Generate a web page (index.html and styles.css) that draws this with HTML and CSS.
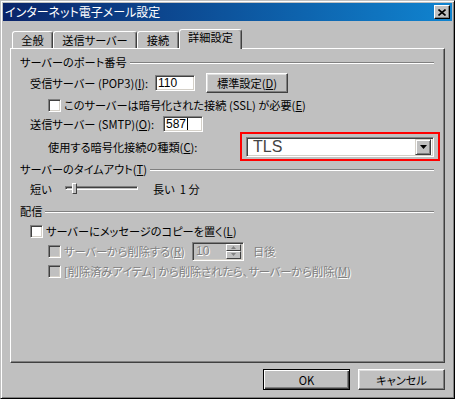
FILE: index.html
```html
<!DOCTYPE html>
<html lang="ja">
<head>
<meta charset="utf-8">
<title>インターネット電子メール設定</title>
<link rel="stylesheet" href="styles.css">
</head>
<body>
<div class="window">
  <div class="titlebar">
    <span class="title">インターネット電子メール設定</span>
    <span class="close"><svg width="8" height="7" viewBox="0 0 8 7"><path d="M0.5 0.5 L7.5 6.5 M7.5 0.5 L0.5 6.5" stroke="#000" stroke-width="1.6" fill="none"/></svg></span>
  </div>
  <div class="body">
    <div class="tabs">
      <div class="tab w1">全般</div>
      <div class="tab w2">送信サーバー</div>
      <div class="tab w3">接続</div>
      <div class="tab sel">詳細設定</div>
    </div>
    <div class="panel">
      <div class="group"><span>サーバーのポート番号</span><span class="gline"></span></div>
      <div class="row h20 mt3 i1">
        <span class="lbl lw125">受信サーバー (POP3)(<u>I</u>):</span>
        <span class="edit w40">110</span>
        <span class="btn pbtn">標準設定(<u>D</u>)</span>
      </div>
      <div class="row mt4 i2">
        <span class="cb"></span><span class="ctext">このサーバーは暗号化された接続 (SSL) が必要(<u>E</u>)</span>
      </div>
      <div class="row mt3 i1">
        <span class="lbl lw133">送信サーバー (SMTP)(<u>O</u>):</span>
        <span class="edit w40">587<span class="caret"></span></span>
      </div>
      <div class="row h29 i2">
        <span class="lbl lw192">使用する暗号化接続の種類(<u>C</u>):</span>
        <span class="hl">
          <span class="combo"><span class="cval">TLS</span><span class="drop"><svg width="7" height="4" viewBox="0 0 7 4"><path d="M0 0 H7 L3.5 4 Z" fill="#000"/></svg></span></span>
        </span>
      </div>
      <div class="group"><span>サーバーのタイムアウト(<u>T</u>)</span><span class="gline"></span></div>
      <div class="row mt4 i1">
        <span class="lbl lw35">短い</span>
        <span class="slider"><span class="track"></span><span class="thumb"></span></span>
        <span class="long">長い&nbsp;&nbsp;1 分</span>
      </div>
      <div class="group mt6"><span>配信</span><span class="gline"></span></div>
      <div class="row mt4 i1">
        <span class="cb"></span><span class="ctext">サーバーにメッセージのコピーを置く(<u>L</u>)</span>
      </div>
      <div class="row h20 mt2 i2">
        <span class="cb dis"></span><span class="ctext off lw128">サーバーから削除する(<u>R</u>)</span>
        <span class="edit spinedit"><span class="off">10</span>
          <span class="spin"><span class="sb"><svg width="5" height="3" viewBox="0 0 5 3"><path d="M2.5 0 L5 3 H0 Z" fill="#808080"/></svg></span><span class="sb"><svg width="5" height="3" viewBox="0 0 5 3"><path d="M0 0 H5 L2.5 3 Z" fill="#808080"/></svg></span></span>
        </span>
        <span class="off days">日後</span>
      </div>
      <div class="row mt2 i2">
        <span class="cb dis"></span><span class="ctext off">[削除済みアイテム] から削除されたら、サーバーから削除(<u>M</u>)</span>
      </div>
    </div>
    <div class="actions">
      <span class="btn abtn default">OK</span>
      <span class="btn abtn">キャンセル</span>
    </div>
  </div>
</div>
</body>
</html>
```

FILE: styles.css
```css
* { box-sizing: border-box; }
body {
  margin: 0;
  background: #c0c0c0;
  font-family: "Noto Sans CJK JP", sans-serif;
  font-size: 11.2px;
  line-height: 16px;
  color: #000;
  font-feature-settings: "palt";
}
u { text-decoration: underline; text-underline-offset: 1px; }
.window {
  width: 455px;
  height: 399px;
  border: 1px solid;
  border-color: #c0c0c0 #000 #000 #c0c0c0;
  box-shadow: inset 1px 1px #fff, inset -1px -1px #808080;
  padding: 2px;
  display: flex;
  flex-direction: column;
}
.titlebar {
  height: 18px;
  flex: none;
  background: linear-gradient(to right, #0a246a, #1084d0);
  display: flex;
  align-items: center;
  justify-content: space-between;
  padding: 0 2px;
  color: #fff;
}
.title { line-height: 16px; font-size: 12px; }
.close {
  width: 16px;
  height: 14px;
  background: #c0c0c0;
  border: 1px solid;
  border-color: #fff #000 #000 #fff;
  box-shadow: inset -1px -1px #808080;
  display: flex;
  align-items: center;
  justify-content: center;
}
.body {
  flex: 1;
  display: flex;
  flex-direction: column;
  padding: 8px 7px 0 7px;
}
.tabs {
  display: flex;
  align-items: flex-end;
  height: 19px;
  padding-left: 2px;
  position: relative;
  z-index: 1;
}
.tab {
  height: 17px;
  border: 1px solid;
  border-bottom: none;
  border-color: #fff #404040 transparent #fff;
  border-radius: 3px 3px 0 0;
  box-shadow: inset -1px 0 #808080;
  text-align: center;
  line-height: 16px;
  background: #c0c0c0;
}
.w1 { width: 41px; }
.w2 { width: 84px; }
.w3 { width: 42px; }
.sel {
  width: 63px;
  height: 20px;
  margin-bottom: -1px;
  line-height: 14px;
}
.panel {
  height: 315px;
  flex: none;
  border: 1px solid;
  border-color: #fff #404040 #404040 #fff;
  box-shadow: inset -1px -1px #808080;
  padding: 5px 10px 0 9px;
}
.group { display: flex; align-items: center; height: 16px; white-space: nowrap; }
.gline {
  flex: 1;
  height: 2px;
  border-top: 1px solid #808080;
  border-bottom: 1px solid #fff;
  margin: 2px 0 0 3px;
}
.row { display: flex; align-items: center; height: 16px; white-space: nowrap; }
.h20 { height: 20px; }
.h29 { height: 29px; }
.mt2 { margin-top: 2px; }
.mt3 { margin-top: 3px; }
.mt4 { margin-top: 4px; }
.mt6 { margin-top: 6px; }
.i1 { padding-left: 10px; }
.i2 { padding-left: 28px; }
.lbl { flex: none; }
.lw35 { width: 35px; }
.lw125 { width: 125px; }
.lw128 { width: 128px; flex: none; }
.lw133 { width: 133px; }
.lw192 { width: 192px; }
.edit {
  height: 16px;
  background: #fff;
  border: 1px solid;
  border-color: #808080 #fff #fff #808080;
  box-shadow: inset 1px 1px #404040, inset -1px -1px #d4d0c8;
  padding: 0 2px;
  font-family: "Liberation Sans", sans-serif;
  font-size: 12px;
  line-height: 14px;
  display: flex;
  align-items: center;
}
.w40 { width: 40px; }
.caret { width: 1px; height: 12px; background: #000; margin-left: 1px; }
.btn {
  background: #c0c0c0;
  border: 1px solid;
  border-color: #fff #404040 #404040 #fff;
  box-shadow: inset -1px -1px #808080, inset 1px 1px #dfdfdf;
  display: flex;
  align-items: center;
  justify-content: center;
}
.pbtn { width: 82px; height: 20px; margin-left: 11px; }
.cb {
  flex: none;
  width: 13px;
  height: 13px;
  background: #fff;
  border: 1px solid;
  border-color: #808080 #fff #fff #808080;
  box-shadow: inset 1px 1px #404040, inset -1px -1px #d4d0c8;
}
.cb.dis { background: #c0c0c0; }
.ctext { margin-left: 3px; }
.off { color: #808080; text-shadow: 1px 1px 0 #fff; }
.hl {
  width: 200px;
  height: 29px;
  border: 2px solid #ff0000;
  padding: 3px 4px 2px 4px;
  display: flex;
}
.combo {
  width: 188px;
  height: 20px;
  background: #fff;
  border: 1px solid;
  border-color: #808080 #fff #fff #808080;
  box-shadow: inset 1px 1px #404040, inset -1px -1px #d4d0c8;
  padding: 2px;
  display: flex;
  align-items: center;
  justify-content: space-between;
}
.cval {
  font-family: "Liberation Sans", sans-serif;
  font-size: 16px;
  line-height: 16px;
  color: #444;
  padding-left: 4px;
}
.drop {
  width: 16px;
  height: 16px;
  background: #c0c0c0;
  border: 1px solid;
  border-color: #d4d0c8 #404040 #404040 #d4d0c8;
  box-shadow: inset 1px 1px #fff, inset -1px -1px #808080;
  display: flex;
  align-items: center;
  justify-content: center;
}
.slider {
  position: relative;
  width: 73px;
  height: 16px;
  display: flex;
  align-items: center;
}
.track {
  width: 73px;
  height: 4px;
  border: 1px solid;
  border-color: #808080 #fff #fff #808080;
  box-shadow: inset 1px 1px #404040;
  margin-top: -3px;
}
.thumb {
  position: absolute;
  left: 7px;
  top: 2px;
  width: 5px;
  height: 11px;
  background: #c0c0c0;
  border: 1px solid;
  border-color: #fff #404040 #404040 #fff;
}
.long { margin-left: 15px; }
.spinedit {
  width: 52px;
  height: 19px;
  background: #c0c0c0;
  justify-content: space-between;
  padding: 2px 2px 2px 3px;
}
.spin { display: flex; flex-direction: column; width: 15px; height: 15px; }
.sb {
  flex: 1;
  background: #c0c0c0;
  border: 1px solid;
  border-color: #fff #404040 #404040 #fff;
  display: flex;
  align-items: center;
  justify-content: center;
}
.days { margin-left: 9px; }
.actions {
  display: flex;
  justify-content: flex-end;
  gap: 8px;
  margin-top: 6px;
}
.abtn { width: 87px; height: 21px; }
.btn.default {
  border-color: #000;
  box-shadow: inset 1px 1px #fff, inset -1px -1px #404040, inset -2px -2px #808080;
}
```
